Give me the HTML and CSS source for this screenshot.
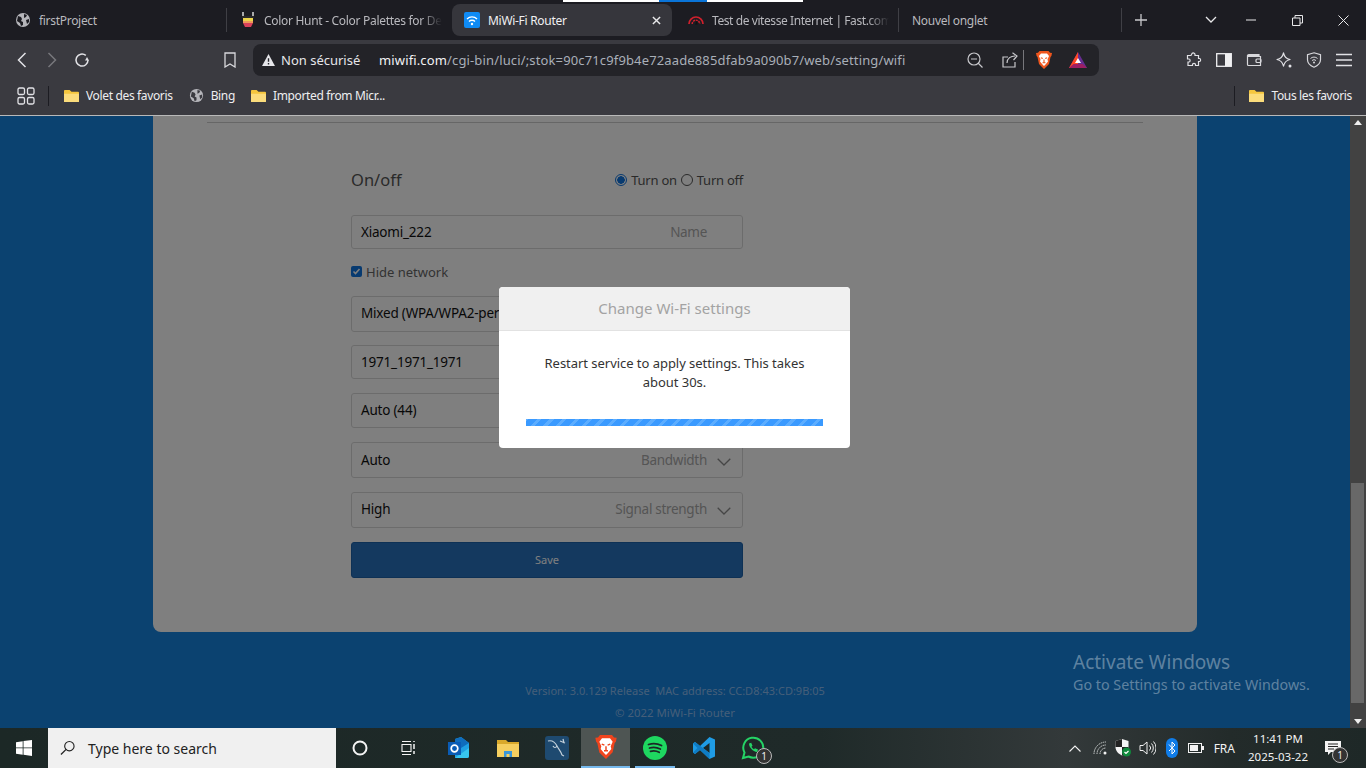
FILE: index.html
```html
<!DOCTYPE html>
<html lang="en">
<head>
    <meta charset="UTF-8">
    <meta name="viewport" content="width=device-width, initial-scale=1.0">
    <title>MiWi-Fi Router</title>
    <link rel="stylesheet" href="styles.css">
</head>
<body>
<div class="screen">

    <!-- tab strip -->
    <div class="tabs">
        <div class="load-bar"><span class="load-white"></span><span class="load-blue"></span><span class="load-white2"></span></div>
        <div class="tab">
            <svg class="ico" viewBox="0 0 16 16"><circle cx="8" cy="8" r="7" fill="#b5b5ba"/><path d="M3 4l3 1 1 2-1 2 2 1v3l-2 1-1-3-3-2zM9 2l3 1-1 2-2 1zM11 8l3-1v3l-2 2z" fill="#1c1c22"/></svg>
            <span class="tab-label">firstProject</span>
        </div>
        <div class="tab tab-sep">
            <svg class="ico" viewBox="0 0 16 16"><path d="M3 0v5M13 0v5" stroke="#d8d8d8" stroke-width="1.500"/><path d="M2 4h12v2H2z" fill="#2a2a2a"/><rect x="3" y="6" width="10" height="3" fill="#ecd44a"/><path d="M3 9h10v2H3z" fill="#ee9a5a"/><path d="M3 11h10l-2 4H5z" fill="#d9415a"/></svg>
            <span class="tab-label tab-fade">Color Hunt - Color Palettes for De</span>
        </div>
        <div class="tab tab-active">
            <svg class="ico" viewBox="0 0 16 16"><rect width="16" height="16" rx="2" fill="#0f8bf5"/><path d="M3 7a7 7 0 0 1 10 0M5 9.500a4.200 4.200 0 0 1 6 0" fill="none" stroke="#fff" stroke-width="1.300"/><circle cx="8" cy="12" r="1.200" fill="#fff"/></svg>
            <span class="tab-label">MiWi-Fi Router</span>
            <svg class="tab-close" viewBox="0 0 10 10"><path d="M1 1l8 8M9 1l-8 8" stroke="#e8e8ea" stroke-width="1.600"/></svg>
        </div>
        <div class="tab tab-fast">
            <svg class="ico" viewBox="0 0 16 16"><path d="M1 12a7 7 0 0 1 14 0" fill="none" stroke="#d0202c" stroke-width="1.700"/><path d="M4.200 12a3.800 3.800 0 0 1 7.600 0" fill="none" stroke="#d0202c" stroke-width="1.500" stroke-dasharray="2 .8"/><path d="M7 12.500l1.800-4 .8 4z" fill="#111"/></svg>
            <span class="tab-label tab-fade">Test de vitesse Internet | Fast.com</span>
        </div>
        <div class="tab tab-sep tab-last">
            <span class="tab-label">Nouvel onglet</span>
        </div>
        <div class="tab-plus">
            <svg viewBox="0 0 12 12"><path d="M6 0v12M0 6h12" stroke="#c8c8cc" stroke-width="1.300"/></svg>
        </div>
        <div class="win-controls">
            <svg class="win-chevron" viewBox="0 0 12 8"><path d="M1 1l5 5 5-5" fill="none" stroke="#e8e8ea" stroke-width="1.300"/></svg>
            <svg class="win-min" viewBox="0 0 10 2"><path d="M0 1h10" stroke="#e8e8ea"/></svg>
            <svg class="win-restore" viewBox="0 0 11 11"><path d="M.5 3h7.500v7.500H.5zM3 3V.5h7.500V8H8" fill="none" stroke="#e8e8ea"/></svg>
            <svg class="win-close" viewBox="0 0 11 11"><path d="M.5.500l10 10M10.500.500l-10 10" stroke="#e8e8ea"/></svg>
        </div>
    </div>

    <!-- toolbar -->
    <div class="toolbar">
        <svg class="nav-back" viewBox="0 0 10 16"><path d="M8.500 1l-7 7 7 7" fill="none" stroke="#e2e2e6" stroke-width="1.500"/></svg>
        <svg class="nav-forward" viewBox="0 0 10 16"><path d="M1.500 1l7 7-7 7" fill="none" stroke="#77777c" stroke-width="1.500"/></svg>
        <svg class="nav-reload" viewBox="0 0 16 16"><path d="M14 8a6 6 0 1 1-2.200-4.600" fill="none" stroke="#e2e2e6" stroke-width="1.500"/><path d="M15 8.500h-4l2-3.500z" fill="#e2e2e6"/></svg>
        <svg class="nav-bookmark" viewBox="0 0 12 16"><path d="M1 1h10v14l-5-3-5 3z" fill="none" stroke="#d8d8dc" stroke-width="1.300"/></svg>
        <div class="urlbar">
            <svg class="warn" viewBox="0 0 14 13"><path d="M7 0l7 13H0z" fill="#e6e6ea"/><path d="M7 4.500v4M7 9.800v1.500" stroke="#232328" stroke-width="1.500"/></svg>
            <span class="not-secure">Non sécurisé</span>
            <span class="url"><b>miwifi.com</b>/cgi-bin/luci/;stok=90c71c9f9b4e72aade885dfab9a090b7/web/setting/wifi</span>
            <svg class="url-zoom" viewBox="0 0 16 16"><circle cx="7" cy="7" r="6" fill="none" stroke="#c8c8cc" stroke-width="1.200"/><path d="M11 11l4.500 4.500M4 7h6" stroke="#c8c8cc" stroke-width="1.200"/></svg>
            <svg class="url-share" viewBox="0 0 17 16"><path d="M6 5H1v10h12v-5" fill="none" stroke="#c8c8cc" stroke-width="1.200"/><path d="M5 11c0-5 4-7 8-7M10.500 .8L15 4l-3.500 4" fill="none" stroke="#c8c8cc" stroke-width="1.200"/></svg>
            <span class="url-divider"></span>
            <svg class="url-brave" viewBox="0 0 16 18"><path d="M3.500 0h9l1.500 1.800 2 .2-.6 3-.9 1-1.500 7L8 18l-5-4.900-1.500-7-.9-1L0 2l2-.2z" fill="#f0561d"/><path d="M3 5l2-2.500h6L13 5l-1.500 3.500.5 2-2.500 3L8 15l-1.500-1.500L4 10.500l.5-2z" fill="#fff"/><path d="M4.800 6.800l2 .8M11.200 6.800l-2 .8M8 8.500v3M6.500 11.800h3" stroke="#f0561d" stroke-width="1.100"/></svg>
            <svg class="url-bat" viewBox="0 0 18 16"><path d="M9 0l9 16H0z" fill="#662d91"/><path d="M9 0L0 16h9z" fill="#ff4724"/><path d="M0 16l4.500-4h9L18 16z" fill="#9e1f63"/><path d="M9 6l3 5H6z" fill="#fff"/></svg>
        </div>
        <svg class="tool-puzzle" viewBox="0 0 16 16"><path d="M6 1.500c1-1 3-.5 3 1v1h3.500v3h1c1.500 0 1.500 3 0 3h-1v4h-3v-1c0-1.500-3-1.500-3 0v1H2v-3.500h1c1.500 0 1.500-3 0-3H1.500V3.500H5z" fill="none" stroke="#e2e2e6" stroke-width="1.200"/></svg>
        <svg class="tool-sidebar" viewBox="0 0 16 16"><rect x=".7" y="1.700" width="14.600" height="12.600" fill="none" stroke="#f0f0f2" stroke-width="1.300"/><rect x="9" y="2" width="6" height="12" fill="#f0f0f2"/></svg>
        <svg class="tool-wallet" viewBox="0 0 16 16"><path d="M2 3.500h11M1.500 4.500a1.500 1.500 0 0 1 1.500-2h10v2M1.500 4.500v8a1 1 0 0 0 1 1h12V4.500z" fill="none" stroke="#d8d8dc" stroke-width="1.200"/><rect x="10" y="7" width="5" height="3.500" rx="1" fill="none" stroke="#d8d8dc" stroke-width="1.200"/></svg>
        <svg class="tool-star" viewBox="0 0 16 16"><path d="M7.500 .8c.8 4 2.300 5.800 6.500 6.700-4.200 .9-5.700 2.700-6.500 6.700-.8-4-2.300-5.800-6.500-6.700C5.200 6.600 6.700 4.800 7.500 .8z" fill="none" stroke="#e2e2e6" stroke-width="1.200" stroke-linejoin="round"/><circle cx="14" cy="14" r="1.500" fill="#e2e2e6"/></svg>
        <svg class="tool-vpn" viewBox="0 0 16 16"><path d="M8 .8l6.500 2v5c0 3.500-3 6-6.500 7.400C4.500 13.800 1.500 11.300 1.500 7.800v-5z" fill="none" stroke="#d8d8dc" stroke-width="1.200"/><path d="M4.500 6.500a5 5 0 0 1 7 0M6 8.500a3 3 0 0 1 4 0" fill="none" stroke="#d8d8dc"/><circle cx="8" cy="10.500" r="1" fill="#d8d8dc"/></svg>
        <svg class="tool-menu" viewBox="0 0 16 14"><path d="M0 1.500h16M0 7h16M0 12.500h16" stroke="#e2e2e6" stroke-width="1.300"/></svg>
    </div>

    <!-- bookmarks -->
    <div class="bookmarks">
        <svg class="bm-apps" viewBox="0 0 18 18"><g fill="none" stroke="#e2e2e6" stroke-width="1.300"><rect x="1" y="1" width="6.500" height="6.500" rx="1.500"/><rect x="10.500" y="1" width="6.500" height="6.500" rx="1.500"/><rect x="1" y="10.500" width="6.500" height="6.500" rx="1.500"/><rect x="10.500" y="10.500" width="6.500" height="6.500" rx="1.500"/></g></svg>
        <span class="bm-divider"></span>
        <div class="bm-item bm-first">
            <svg class="bm-ico" viewBox="0 0 16 14"><path d="M0 2a1 1 0 0 1 1-1h5l2 2h7a1 1 0 0 1 1 1v9a1 1 0 0 1-1 1H1a1 1 0 0 1-1-1z" fill="#f5c63e"/><path d="M0 5h16v8a1 1 0 0 1-1 1H1a1 1 0 0 1-1-1z" fill="#fbdc7c"/></svg>
            <span>Volet des favoris</span>
        </div>
        <div class="bm-item">
            <svg class="bm-ico" viewBox="0 0 16 16"><circle cx="8" cy="8" r="7" fill="#b5b5ba"/><path d="M3 4l3 1 1 2-1 2 2 1v3l-2 1-1-3-3-2zM9 2l3 1-1 2-2 1zM11 8l3-1v3l-2 2z" fill="#3a3a40"/></svg>
            <span>Bing</span>
        </div>
        <div class="bm-item">
            <svg class="bm-ico" viewBox="0 0 16 14"><path d="M0 2a1 1 0 0 1 1-1h5l2 2h7a1 1 0 0 1 1 1v9a1 1 0 0 1-1 1H1a1 1 0 0 1-1-1z" fill="#f5c63e"/><path d="M0 5h16v8a1 1 0 0 1-1 1H1a1 1 0 0 1-1-1z" fill="#fbdc7c"/></svg>
            <span>Imported from Micr...</span>
        </div>
        <span class="bm-divider bm-divider-right"></span>
        <div class="bm-item bm-all">
            <svg class="bm-ico" viewBox="0 0 16 14"><path d="M0 2a1 1 0 0 1 1-1h5l2 2h7a1 1 0 0 1 1 1v9a1 1 0 0 1-1 1H1a1 1 0 0 1-1-1z" fill="#f5c63e"/><path d="M0 5h16v8a1 1 0 0 1-1 1H1a1 1 0 0 1-1-1z" fill="#fbdc7c"/></svg>
            <span>Tous les favoris</span>
        </div>
    </div>

    <!-- router page -->
    <div class="viewport">
        <div class="page">
            <div class="card">
                <div class="card-rule"></div>
                <form class="wifi-form">
                    <div class="onoff">
                        <span class="onoff-title">On/off</span>
                        <div class="radios">
                            <span class="radio radio-on"></span><span class="radio-text">Turn on</span>
                            <span class="radio"></span><span class="radio-text">Turn off</span>
                        </div>
                    </div>
                    <div class="field field-name"><span class="value">Xiaomi_222</span><span class="hint">Name</span></div>
                    <div class="hide-row">
                        <span class="check"><svg viewBox="0 0 11 11"><path d="M2.500 5.500l2 2 4-4.500" fill="none" stroke="#fff" stroke-width="1.600"/></svg></span>
                        <span>Hide network</span>
                    </div>
                    <div class="field"><span class="value">Mixed (WPA/WPA2-personal)</span></div>
                    <div class="field field-pass"><span class="value">1971_1971_1971</span></div>
                    <div class="field field-channel"><span class="value">Auto (44)</span></div>
                    <div class="field field-band"><span class="value">Auto</span><span class="hint">Bandwidth</span><svg class="chev" viewBox="0 0 14 8"><path d="M.7.700L7 7l6.300-6.300" fill="none" stroke="#8c8c8c" stroke-width="1.300"/></svg></div>
                    <div class="field"><span class="value">High</span><span class="hint">Signal strength</span><svg class="chev" viewBox="0 0 14 8"><path d="M.7.700L7 7l6.300-6.300" fill="none" stroke="#8c8c8c" stroke-width="1.300"/></svg></div>
                    <button type="button" class="save">Save</button>
                </form>
            </div>
            <div class="footer">
                <p class="footer-version">Version: 3.0.129 Release&nbsp; MAC address: CC:D8:43:CD:9B:05</p>
                <p class="footer-copy">© 2022 MiWi-Fi Router</p>
            </div>
        </div>

        <div class="overlay"></div>
        <div class="modal">
            <div class="modal-head">Change Wi-Fi settings</div>
            <div class="modal-body">
                <p>Restart service to apply settings. This takes about 30s.</p>
                <div class="progress"></div>
            </div>
        </div>

        <div class="activate">
            <div class="activate-title">Activate Windows</div>
            <div class="activate-sub">Go to Settings to activate Windows.</div>
        </div>

        <div class="scrollbar">
            <svg class="scroll-arrow" viewBox="0 0 8 5"><path d="M4 0l4 5H0z" fill="#eee"/></svg>
            <div class="scroll-track"><div class="scroll-thumb"></div></div>
            <svg class="scroll-arrow" viewBox="0 0 8 5"><path d="M4 5l4-5H0z" fill="#eee"/></svg>
        </div>
    </div>

    <!-- windows taskbar -->
    <div class="taskbar">
        <svg class="start" viewBox="0 0 16 16"><path d="M0 2.200l6.700-1v6.300H0zM7.500 1.100L16 0v7.500H7.500zM0 8.300h6.700v6.500L0 13.800zM7.500 8.300H16V16l-8.500-1.200z" fill="#fff"/></svg>
        <div class="search">
            <svg class="search-ico" viewBox="0 0 16 16"><circle cx="10" cy="6" r="5" fill="none" stroke="#222" stroke-width="1.200"/><path d="M6.500 9.500L1 15" stroke="#222" stroke-width="1.400"/></svg>
            <span>Type here to search</span>
        </div>
        <div class="task-icons">
            <div class="task"><svg class="t16 cortana" viewBox="0 0 16 16"><circle cx="8" cy="8" r="6.500" fill="none" stroke="#f4f4f4" stroke-width="2"/></svg></div>
            <div class="task"><svg class="t16 taskview" viewBox="0 0 16 16"><path d="M2 1.500h9M2 14.500h9M2 4.500h9v7H2z" fill="none" stroke="#f4f4f4" stroke-width="1.100"/><path d="M14 1v1M14 4v5M14 11v3" stroke="#f4f4f4" stroke-width="1.500"/></svg></div>
            <div class="task"><svg class="t24" viewBox="0 0 24 24"><path d="M8 3l6-2 8 6v13a2 2 0 0 1-2 2H8z" fill="#1fa0e4"/><path d="M14 1l8 6-8 5-6-4V3z" fill="#0f6cbd"/><path d="M8 22l14-10v8a2 2 0 0 1-2 2z" fill="#37c6f0"/><rect x="1" y="6" width="13" height="13" fill="#0a5cb5"/><circle cx="7.500" cy="12.500" r="3.300" fill="none" stroke="#fff" stroke-width="1.700"/></svg></div>
            <div class="task"><svg class="t24" viewBox="0 0 24 24"><path d="M1 4h9l2 2h11v3H1z" fill="#d9a92b"/><path d="M1 8h22v13H1z" fill="#f5cf5f"/><path d="M8 21v-6h8v6h-2.500v-3h-3v3z" fill="#3b96d8"/></svg></div>
            <div class="task"><svg class="t24" viewBox="0 0 24 24"><rect width="24" height="24" rx="3" fill="#1e4a70"/><path d="M3 5c4-1 7 1 9 5s4 5 5 9M12 10c-1 2-3 2-4 0M17 19l2 1M15 5l5 2M18 3l1 4" fill="none" stroke="#c4d2dc" stroke-width="1.200"/></svg></div>
            <div class="task task-active"><svg class="t24" viewBox="0 0 16 18"><path d="M3.500 0h9l1.500 1.800 2 .2-.6 3-.9 1-1.500 7L8 18l-5-4.900-1.500-7-.9-1L0 2l2-.2z" fill="#f0441d"/><path d="M3 5l2-2.500h6L13 5l-1.500 3.500.5 2-2.500 3L8 15l-1.500-1.500L4 10.500l.5-2z" fill="#fff"/><path d="M4.800 6.800l2 .8M11.200 6.800l-2 .8M8 8.500v3M6.500 11.800h3" stroke="#f0441d" stroke-width="1.100"/></svg></div>
            <div class="task task-open"><svg class="t24" viewBox="0 0 24 24"><circle cx="12" cy="12" r="12" fill="#1ed760"/><path d="M5.500 8.500c4-1.200 9-1 13 1M6.500 12c3.500-1 7.500-.7 10.800 1M7.500 15.300c3-.7 6-.5 8.700 1" fill="none" stroke="#1c2826" stroke-width="1.800" stroke-linecap="round"/></svg></div>
            <div class="task"><svg class="t24" viewBox="0 0 24 24"><path d="M17.500 1L23 3.500v17L17.500 23 8 14l-5 4-2-1.500v-9L3 6l5 4z" fill="#1f9ce5"/><path d="M17.500 7L11 12l6.500 5z" fill="#1c2826"/><path d="M1 7.500L3 6l14.500 11v6L8 14 3 18l-2-1.500L5.500 12z" fill="#0f7cc4"/></svg></div>
            <div class="task">
                <svg class="t24" viewBox="0 0 24 24"><path d="M2 22l1.500-5.500A10 10 0 1 1 7.500 20.500z" fill="none" stroke="#25d366" stroke-width="2"/><path d="M8 7.500c0 4 4 8 8 8.500l1-2.500-3-1.300-1 1c-1-.5-2-1.500-2.500-2.500l1-1-1.300-3z" fill="#25d366"/></svg>
                <span class="count">1</span>
            </div>
        </div>
        <div class="tray">
            <svg class="tray-chevron" viewBox="0 0 12 7"><path d="M.5 6.500L6 1l5.500 5.500" fill="none" stroke="#f2f2f2" stroke-width="1.100"/></svg>
            <svg class="tray-wifi" viewBox="0 0 14 14"><path d="M1 13A12 12 0 0 1 13 1M4 13a9 9 0 0 1 9-9M7 13a6 6 0 0 1 6-6" fill="none" stroke="#cfd2d2" stroke-dasharray="1.500 .7"/><circle cx="12" cy="12" r="1.500" fill="#f2f2f2"/></svg>
            <svg class="tray-shield" viewBox="0 0 16 18"><path d="M7 0l6.500 2v6c0 4-3 7-6.500 8.500C3.500 15 .5 12 .5 8V2z" fill="#f4f4f4"/><path d="M7 0v8H.5V2zM7 8h6.500c0 4-3 7-6.500 8.500z" fill="#222"/><circle cx="11.500" cy="13" r="4.500" fill="#0f8a3c"/><path d="M9.500 13l1.500 1.500 2.500-2.500" fill="none" stroke="#fff" stroke-width="1.200"/></svg>
            <svg class="tray-sound" viewBox="0 0 17 16"><path d="M1 5.500h3L8 2v12l-4-3.500H1z" fill="none" stroke="#f2f2f2"/><path d="M10.500 5.500a3.500 3.500 0 0 1 0 5M12.500 3.500a6.500 6.500 0 0 1 0 9M14.500 1.500a9.500 9.500 0 0 1 0 13" fill="none" stroke="#f2f2f2"/></svg>
            <svg class="tray-bt" viewBox="0 0 12 20"><rect width="12" height="20" rx="6" fill="#0f7ce8"/><path d="M3 6.500l6 6.500-3 3V4l3 3-6 6" fill="none" stroke="#fff" stroke-width="1"/></svg>
            <svg class="tray-batt" viewBox="0 0 16 10"><rect x=".5" y=".5" width="13" height="9" fill="none" stroke="#f2f2f2"/><rect x="2" y="2" width="8" height="6" fill="#f2f2f2"/><rect x="14" y="3" width="2" height="4" fill="#f2f2f2"/></svg>
            <span class="tray-lang">FRA</span>
            <div class="clock"><div>11:41 PM</div><div>2025-03-22</div></div>
            <div class="notify">
                <svg viewBox="0 0 16 14"><path d="M0 0h16v11H6l-3 3v-3H0z" fill="#f4f4f4"/><path d="M3 3h10M3 5.500h10M3 8h6" stroke="#222"/></svg>
                <span class="count">1</span>
            </div>
        </div>
    </div>
</div>
</body>
</html>
```

FILE: styles.css
```css
* {
    box-sizing: border-box;
}
body {
    margin: 0;
    font-family: "Noto Sans", "Open Sans", sans-serif;
    background-color: #000;
    overflow: hidden;
}
.screen {
    width: 1366px;
    height: 768px;
    display: flex;
    flex-direction: column;
}
svg {
    display: block;
    flex: none;
}

/* tabs */
.tabs {
    position: relative;
    height: 40px;
    display: flex;
    align-items: center;
    background-color: #1c1c22;
    color: #b9b9be;
    font-size: 12px;
    letter-spacing: -0.3px;
}
.load-bar {
    position: absolute;
    top: 0;
    left: 563px;
    height: 2px;
    display: flex;
}
.load-white {
    width: 96px;
    background-color: #fff;
}
.load-blue {
    width: 48px;
    background-color: #0a74d8;
}
.load-white2 {
    width: 96px;
    background-color: #fff;
}
.tab {
    width: 226px;
    height: 32px;
    flex: none;
    display: flex;
    align-items: center;
    gap: 8px;
    padding: 0 10px 0 15px;
    overflow: hidden;
}
.tab-sep {
    border-left: 1px solid #3f3f45;
    height: 24px;
    padding-left: 13px;
}
.tab-last {
    width: 224px;
    border-right: 1px solid #3f3f45;
    padding-left: 13px;
}
.tab-active {
    width: 220px;
    height: 32px;
    padding: 0 10px 0 12px;
    background-color: #36363c;
    border-radius: 8px;
    color: #f0f0f2;
}
.tab-fast {
    padding-left: 16px;
    padding-right: 9px;
    letter-spacing: -0.42px;
}
.tab-label {
    flex: 1;
    white-space: nowrap;
    overflow: hidden;
}
.tab-fade {
    -webkit-mask-image: linear-gradient(to right, #000 88%, transparent);
    mask-image: linear-gradient(to right, #000 88%, transparent);
}
.ico {
    width: 16px;
    height: 16px;
}
.tab-close {
    width: 9px;
    height: 9px;
    margin-right: 1px;
}
.tab-plus {
    width: 12px;
    margin-left: 13px;
    flex: none;
}
.win-controls {
    margin-left: auto;
    display: flex;
    align-items: center;
}
.win-chevron {
    width: 12px;
    height: 8px;
    margin-right: 29px;
}
.win-min {
    width: 10px;
    height: 2px;
    margin-right: 36px;
}
.win-restore {
    width: 11px;
    height: 11px;
    margin-right: 35px;
}
.win-close {
    width: 11px;
    height: 11px;
    margin-right: 17px;
}

/* toolbar */
.toolbar {
    height: 40px;
    display: flex;
    align-items: center;
    background-color: #3a3a40;
    padding-left: 17px;
}
.nav-back, .nav-forward {
    width: 10px;
    height: 16px;
}
.nav-forward {
    margin-left: 20px;
}
.nav-reload {
    width: 16px;
    height: 16px;
    margin-left: 17px;
}
.nav-bookmark {
    width: 12px;
    height: 16px;
    margin-left: 134px;
}
.urlbar {
    width: 846px;
    height: 32px;
    margin-left: 17px;
    padding-left: 9px;
    display: flex;
    align-items: center;
    background-color: #232328;
    border-radius: 8px;
    font-size: 13px;
    color: #a9afb8;
}
.warn {
    width: 13px;
    height: 12px;
}
.not-secure {
    margin-left: 6px;
    width: 80px;
    color: #e6e6ea;
    white-space: nowrap;
}
.url {
    margin-left: 18px;
    width: 560px;
    white-space: nowrap;
    letter-spacing: 0.14px;
}
.url b {
    font-weight: normal;
    color: #f2f2f4;
}
.url-zoom {
    width: 16px;
    height: 16px;
    margin-left: 28px;
}
.url-share {
    width: 17px;
    height: 16px;
    margin-left: 19px;
}
.url-divider {
    width: 1px;
    height: 20px;
    margin-left: 4px;
    background-color: #77777c;
}
.url-brave {
    width: 16px;
    height: 18px;
    margin-left: 12px;
}
.url-bat {
    width: 18px;
    height: 16px;
    margin-left: 17px;
}
.tool-puzzle {
    width: 16px;
    height: 16px;
    margin-left: 87px;
}
.tool-sidebar, .tool-wallet, .tool-star, .tool-vpn {
    width: 16px;
    height: 16px;
    margin-left: 14px;
}
.tool-menu {
    width: 16px;
    height: 14px;
    margin-left: 14px;
}

/* bookmarks */
.bookmarks {
    height: 36px;
    display: flex;
    align-items: center;
    background-color: #3a3a40;
    border-bottom: 1px solid #b9b9b9;
    padding: 0 0 4px 17px;
    font-size: 12px;
    letter-spacing: -0.35px;
    color: #eeeef0;
}
.bm-apps {
    width: 18px;
    height: 18px;
}
.bm-divider {
    width: 1px;
    height: 20px;
    margin-left: 13px;
    background-color: #1c1c22;
}
.bm-divider-right {
    margin-left: auto;
}
.bm-item {
    display: flex;
    align-items: center;
    gap: 7px;
    margin-left: 16px;
    white-space: nowrap;
}
.bm-first {
    margin-left: 15px;
}
.bm-all {
    margin-left: 14px;
    margin-right: 14px;
}
.bm-ico {
    width: 15px;
    height: 15px;
}

/* router page */
.viewport {
    position: relative;
    flex: 1;
    display: flex;
    overflow: hidden;
}
.page {
    width: 1350px;
    flex: none;
    background-color: #1684e0;
}
.card {
    width: 1044px;
    height: 516px;
    margin-left: 153px;
    padding-top: 6px;
    background-color: #fff;
    border-radius: 0 0 8px 8px;
}
.card-rule {
    height: 1px;
    margin: 0 54px;
    background-color: #ccc;
}
.wifi-form {
    width: 392px;
    margin: 45px 0 0 198px;
}
.onoff {
    height: 24px;
    display: flex;
    align-items: center;
    justify-content: space-between;
}
.onoff-title {
    font-size: 16.500px;
    color: #555;
    padding-bottom: 2px;
}
.radios {
    display: flex;
    align-items: center;
    font-size: 13px;
    letter-spacing: -0.25px;
    color: #555;
}
.radio {
    width: 12px;
    height: 12px;
    border: 1px solid #555;
    border-radius: 50%;
    margin-right: 4px;
}
.radio-on {
    border-color: #0f74e0;
    background: radial-gradient(circle, #0f74e0 0 3.500px, #fff 4px);
}
.radio-text {
    margin-right: 4px;
}
.radio-text:last-child {
    margin-right: 0;
}
.field {
    height: 36px;
    margin-top: 14px;
    padding: 0 11px 2px 9px;
    display: flex;
    align-items: center;
    border: 1px solid #d9d9d9;
    border-radius: 3px;
    font-size: 13.500px;
    letter-spacing: -0.3px;
}
.field-name {
    height: 34px;
    margin-top: 23px;
    padding-right: 35px;
    padding-bottom: 0;
}
.field-pass {
    height: 34px;
    margin-top: 13px;
    padding-bottom: 1px;
}
.field-channel {
    height: 35px;
}
.field-band {
    padding-bottom: 0;
}
.value {
    color: #111;
    white-space: nowrap;
    letter-spacing: -0.2px;
}
.hint {
    margin-left: auto;
    color: #aaa;
}
.chev {
    width: 14px;
    height: 8px;
    margin-left: 10px;
    margin-top: 4px;
}
.hide-row {
    height: 20px;
    margin-top: 13px;
    display: flex;
    align-items: center;
    gap: 4px;
    font-size: 13px;
    color: #666;
}
.hide-row + .field {
    margin-top: 14px;
}
.check {
    width: 11px;
    height: 11px;
    margin-bottom: 2px;
    background-color: #0f74e0;
    border-radius: 2px;
}
.save {
    display: block;
    width: 100%;
    height: 36px;
    margin-top: 14px;
    padding: 0 0 2px;
    border: 1px solid #1c62ab;
    border-radius: 3px;
    background-color: #2872be;
    color: #fff;
    font-family: inherit;
    font-size: 11px;
}
.footer {
    text-align: center;
    font-size: 11px;
    color: #8abdf2;
}
.footer p {
    margin: 0;
}
.footer-version {
    padding-top: 51px;
}
.footer .footer-copy {
    margin-top: 7px;
    font-size: 11.400px;
}

/* modal over the dimmed page */
.overlay {
    position: absolute;
    inset: 0;
    background-color: rgba(0, 0, 0, 0.5);
}
.modal {
    position: absolute;
    left: 499px;
    top: 171px;
    width: 351px;
    height: 161px;
    border-radius: 4px;
    overflow: hidden;
    background-color: #fff;
}
.modal-head {
    height: 44px;
    line-height: 43px;
    text-align: center;
    background-color: #f0f0f0;
    border-bottom: 1px solid #e2e2e2;
    font-size: 15px;
    color: #a3a3a3;
}
.modal-body {
    padding: 23px 27px 0;
    font-size: 13px;
    line-height: 19px;
    letter-spacing: -0.04px;
    color: #333;
    text-align: center;
}
.modal-body p {
    margin: 0 10px;
}
.progress {
    height: 7px;
    margin-top: 27px;
    background: repeating-linear-gradient(-45deg, #3a9aff 0 6px, #5cadff 6px 9px);
}
.activate {
    position: absolute;
    left: 1073px;
    top: 534px;
    color: rgba(255, 255, 255, 0.35);
}
.activate-title {
    font-size: 19px;
    line-height: 24px;
}
.activate-sub {
    font-size: 14.300px;
    line-height: 21px;
}
.scrollbar {
    position: absolute;
    right: 0;
    top: 0;
    bottom: 0;
    width: 16px;
    display: flex;
    flex-direction: column;
    align-items: center;
    background-color: #424242;
    padding: 4px 0;
}
.scroll-arrow {
    width: 8px;
    height: 5px;
}
.scroll-track {
    flex: 1;
    width: 100%;
    display: flex;
    flex-direction: column;
    justify-content: flex-end;
    padding: 0 2px 16px 1px;
}
.scroll-thumb {
    height: 220px;
    background-color: #686868;
}

/* taskbar */
.taskbar {
    height: 40px;
    display: flex;
    align-items: center;
    color: #f2f2f2;
    background: linear-gradient(to right, #1c2826 0, #1f2a29 60%, #33393a 78%, #232b2a 90%, #1e2827 100%);
}
.start {
    width: 16px;
    height: 16px;
    margin-left: 16px;
}
.search {
    width: 288px;
    height: 40px;
    margin-left: 16px;
    padding-left: 12px;
    display: flex;
    align-items: center;
    gap: 13px;
    background-color: #f0f0f0;
    font-size: 14px;
    color: #222;
}
.search-ico {
    width: 15px;
    height: 16px;
}
.task-icons {
    display: flex;
}
.task {
    position: relative;
    width: 49px;
    height: 40px;
    display: flex;
    align-items: center;
    justify-content: center;
}
.task-active {
    background-color: #4e5553;
    border-bottom: 2px solid #76b9ed;
}
.task-open::after {
    content: "";
    position: absolute;
    left: 5px;
    right: 4px;
    bottom: 0;
    height: 2px;
    background-color: #76b9ed;
}
.t16 {
    width: 16px;
    height: 16px;
}
.t24 {
    width: 24px;
    height: 24px;
}
.cortana {
    margin-right: 1px;
}
.taskview {
    margin-right: 3px;
}
.count {
    position: absolute;
    left: 28px;
    top: 20px;
    width: 16px;
    height: 16px;
    line-height: 14px;
    border: 1px solid #bbb;
    border-radius: 50%;
    background-color: #333;
    color: #eee;
    font-size: 10px;
    text-align: center;
}
.tray {
    margin-left: auto;
    display: flex;
    align-items: center;
}
.tray-chevron {
    width: 12px;
    height: 7px;
}
.tray-wifi {
    width: 14px;
    height: 14px;
    margin-left: 12px;
}
.tray-shield {
    width: 16px;
    height: 18px;
    margin-left: 8px;
}
.tray-sound {
    width: 17px;
    height: 16px;
    margin-left: 8px;
}
.tray-bt {
    width: 12px;
    height: 20px;
    margin-left: 10px;
}
.tray-batt {
    width: 16px;
    height: 10px;
    margin-left: 10px;
}
.tray-lang {
    margin-left: 10px;
    font-size: 12px;
}
.clock {
    width: 70px;
    margin-left: 8px;
    text-align: center;
    font-size: 11.500px;
    line-height: 18px;
}
.notify {
    position: relative;
    width: 16px;
    margin-left: 12px;
    margin-right: 25px;
}
.notify svg {
    width: 16px;
    height: 14px;
}
.notify .count {
    left: 7px;
    top: 6px;
}
```
